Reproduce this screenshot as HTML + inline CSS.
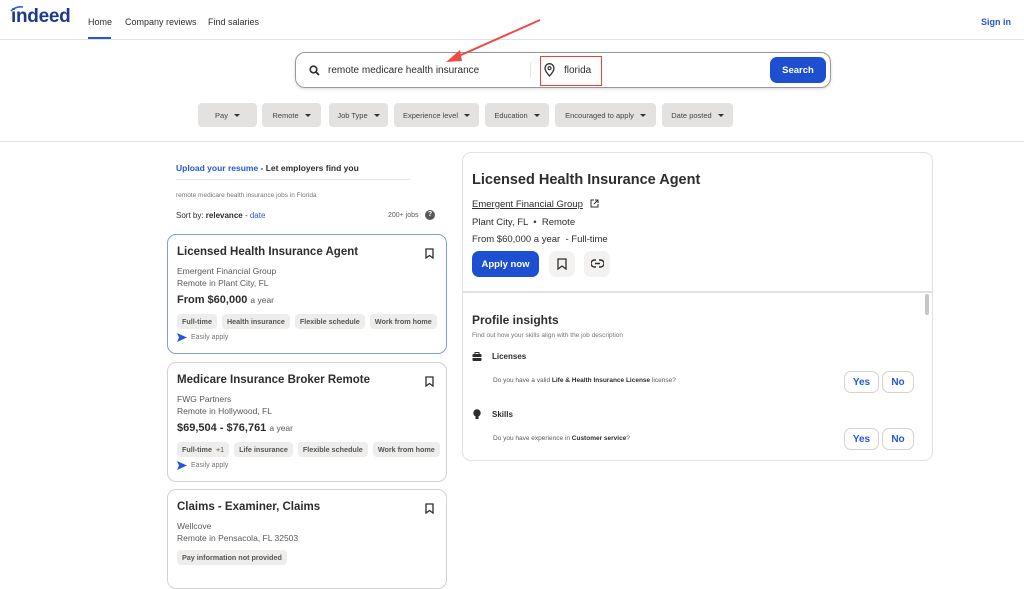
<!DOCTYPE html>
<html><head><meta charset="utf-8"><style>
*{box-sizing:border-box;margin:0;padding:0}
body{width:1024px;height:567px;overflow:hidden;background:#fff;font-family:"Liberation Sans",sans-serif;color:#2d2d2d;position:relative}
.a{position:absolute;white-space:nowrap}
.pill{position:absolute;top:103px;height:24px;background:#e4e2e0;border-radius:4px;font-size:7.5px;color:#444;display:flex;align-items:center;justify-content:center;gap:6px}
.pill:after{content:"";border:3px solid transparent;border-top:3px solid #333;margin-top:3px}
.card{position:absolute;left:167px;width:280px;border:1px solid #d4d2d0;border-radius:9px;background:#fff}
.card .t{position:absolute;left:9px;font-size:11.5px;font-weight:bold;color:#2d2d2d}
.card .s{position:absolute;left:9px;font-size:8.5px;color:#595959}
.card .p{position:absolute;left:9px;font-size:11px;font-weight:bold}
.card .p span{font-weight:normal;font-size:8.5px;color:#595959}
.tags{position:absolute;left:9px;display:flex;gap:5px}
.tag{background:#eeedeb;border-radius:4px;font-size:7.2px;font-weight:bold;color:#555;padding:3px 5px}
.ea{position:absolute;left:9px;font-size:7px;color:#767676;display:flex;align-items:center;gap:4px}
.bm{position:absolute;right:12px;width:9px;height:11px}
.yn{position:absolute;height:22px;border:1px solid #d4d2d0;border-radius:7px;font-size:10px;font-weight:bold;color:#2557d6;display:flex;align-items:center;justify-content:center}
</style></head><body>
<!-- header -->
<div class="a" style="left:11px;top:6px;font-size:19px;font-weight:bold;color:#1d3a8f;letter-spacing:-0.3px">indeed</div>
<svg class="a" style="left:10px;top:6px" width="14" height="6"><path d="M1 5 Q6 0 13 1" stroke="#2164f3" stroke-width="1.6" fill="none"/></svg>
<div class="a" style="left:88px;top:17px;font-size:9px;color:#2d2d2d">Home</div>
<div class="a" style="left:88px;top:37px;width:23px;height:2px;background:#2557d6"></div>
<div class="a" style="left:125px;top:17px;font-size:9px">Company reviews</div>
<div class="a" style="left:208px;top:17px;font-size:9px">Find salaries</div>
<div class="a" style="left:981px;top:17px;font-size:9px;font-weight:bold;color:#2557d6">Sign in</div>
<div class="a" style="left:0;top:39px;width:1024px;height:1px;background:#e4e2e0"></div>
<!-- search -->
<div class="a" style="left:295px;top:52px;width:536px;height:36px;border:1px solid #9a9896;border-radius:10px;box-shadow:0 1px 3px rgba(0,0,0,.15)"></div>
<svg class="a" style="left:309px;top:65px" width="11" height="11"><circle cx="4.5" cy="4.5" r="3.3" stroke="#2d2d2d" stroke-width="1.6" fill="none"/><path d="M7 7L10 10" stroke="#2d2d2d" stroke-width="1.8"/></svg>
<div class="a" style="left:328px;top:65px;font-size:10px">remote medicare health insurance</div>
<div class="a" style="left:530px;top:62px;width:1px;height:16px;background:#e4e2e0"></div>
<svg class="a" style="left:544px;top:63px" width="11" height="14"><path d="M5.5 13C5.5 13 1 8 1 5.2A4.5 4.5 0 0 1 10 5.2C10 8 5.5 13 5.5 13Z" stroke="#2d2d2d" stroke-width="1.3" fill="none"/><circle cx="5.5" cy="5.2" r="1.5" stroke="#2d2d2d" stroke-width="1.1" fill="none"/></svg>
<div class="a" style="left:564px;top:65px;font-size:10px">florida</div>
<div class="a" style="left:540px;top:56px;width:62px;height:30px;border:1.5px solid #e8413a"></div>
<div class="a" style="left:770px;top:57px;width:56px;height:26px;background:#1f4fd1;border-radius:7px;color:#fff;font-size:9.5px;font-weight:bold;display:flex;align-items:center;justify-content:center">Search</div>
<svg class="a" style="left:440px;top:15px" width="110" height="55"><path d="M100 5L12 44" stroke="#ee4b45" stroke-width="2"/><path d="M6 47L20 35L22 46Z" fill="#ee4b45"/></svg>
<!-- pills -->
<div class="pill" style="left:198px;width:59px">Pay</div>
<div class="pill" style="left:262px;width:59px">Remote</div>
<div class="pill" style="left:329px;width:59px">Job Type</div>
<div class="pill" style="left:394px;width:85px">Experience level</div>
<div class="pill" style="left:485px;width:64px">Education</div>
<div class="pill" style="left:555px;width:101px">Encouraged to apply</div>
<div class="pill" style="left:662px;width:71px">Date posted</div>
<div class="a" style="left:0;top:141px;width:1024px;height:1px;background:#e4e2e0"></div>
<!-- left column -->
<div class="a" style="left:176px;top:163px;font-size:8.5px;font-weight:bold"><span style="color:#2557d6">Upload your resume</span> - Let employers find you</div>
<div class="a" style="left:176px;top:179px;width:234px;height:1px;background:#e4e2e0"></div>
<div class="a" style="left:176px;top:192px;font-size:6.5px;color:#767676">remote medicare health insurance jobs in Florida</div>
<div class="a" style="left:176px;top:211px;font-size:8px">Sort by: <b>relevance</b> - <span style="color:#2557d6">date</span></div>
<div class="a" style="left:388px;top:212px;font-size:7px;color:#595959">200+ jobs</div>
<div class="a" style="left:425px;top:210px;width:10px;height:10px;border-radius:50%;background:#595959;color:#fff;font-size:7px;font-weight:bold;text-align:center;line-height:10px">?</div>

<div class="card" style="top:234px;height:120px;border-color:#7f9fdc">
<div class="t" style="top:11px">Licensed Health Insurance Agent</div>
<svg class="bm" style="top:13px" viewBox="0 0 9 11"><path d="M1 1H8V10L4.5 7.5L1 10Z" stroke="#2d2d2d" stroke-width="1.3" fill="none"/></svg>
<div class="s" style="top:31px">Emergent Financial Group</div>
<div class="s" style="top:43px">Remote in Plant City, FL</div>
<div class="p" style="top:59px">From $60,000 <span>a year</span></div>
<div class="tags" style="top:79px"><span class="tag">Full-time</span><span class="tag">Health insurance</span><span class="tag">Flexible schedule</span><span class="tag">Work from home</span></div>
<div class="ea" style="top:98px"><svg width="10" height="9"><path d="M0 0L10 4.5L0 9L2 4.5Z" fill="#2557d6"/></svg>Easily apply</div>
</div>
<div class="card" style="top:362px;height:120px">
<div class="t" style="top:11px">Medicare Insurance Broker Remote</div>
<svg class="bm" style="top:13px" viewBox="0 0 9 11"><path d="M1 1H8V10L4.5 7.5L1 10Z" stroke="#2d2d2d" stroke-width="1.3" fill="none"/></svg>
<div class="s" style="top:31px">FWG Partners</div>
<div class="s" style="top:43px">Remote in Hollywood, FL</div>
<div class="p" style="top:59px">$69,504 - $76,761 <span>a year</span></div>
<div class="tags" style="top:79px"><span class="tag">Full-time &nbsp;<span style="font-weight:normal">+1</span></span><span class="tag">Life insurance</span><span class="tag">Flexible schedule</span><span class="tag">Work from home</span></div>
<div class="ea" style="top:98px"><svg width="10" height="9"><path d="M0 0L10 4.5L0 9L2 4.5Z" fill="#2557d6"/></svg>Easily apply</div>
</div>
<div class="card" style="top:489px;height:100px">
<div class="t" style="top:11px">Claims - Examiner, Claims</div>
<svg class="bm" style="top:13px" viewBox="0 0 9 11"><path d="M1 1H8V10L4.5 7.5L1 10Z" stroke="#2d2d2d" stroke-width="1.3" fill="none"/></svg>
<div class="s" style="top:31px">Wellcove</div>
<div class="s" style="top:43px">Remote in Pensacola, FL 32503</div>
<div class="tags" style="top:60px"><span class="tag">Pay information not provided</span></div>
</div>
<!-- right panel -->
<div class="a" style="left:462px;top:152px;width:471px;height:309px;border:1px solid #e4e2e0;border-radius:9px"></div>
<div class="a" style="left:472px;top:172px;font-size:14.5px;font-weight:bold">Licensed Health Insurance Agent</div>
<div class="a" style="left:472px;top:199px;font-size:9.5px;color:#2d2d2d;text-decoration:underline">Emergent Financial Group</div>
<svg class="a" style="left:590px;top:199px" width="9" height="9"><path d="M4 1H1V8H8V5M5 1H8V4M8 1L4 5" stroke="#2d2d2d" stroke-width="1" fill="none"/></svg>
<div class="a" style="left:472px;top:217px;font-size:9.5px;color:#2d2d2d">Plant City, FL &nbsp;•&nbsp; Remote</div>
<div class="a" style="left:472px;top:234px;font-size:9.5px">From $60,000 a year &nbsp;- Full-time</div>
<div class="a" style="left:472px;top:251px;width:67px;height:26px;background:#1f4fd1;border-radius:7px;color:#fff;font-size:9.5px;font-weight:bold;display:flex;align-items:center;justify-content:center">Apply now</div>
<div class="a" style="left:549px;top:251px;width:26px;height:26px;background:#f3f2f1;border-radius:7px"></div>
<svg class="a" style="left:557px;top:258px" width="10" height="12"><path d="M1 1H9V11L5 8L1 11Z" stroke="#2d2d2d" stroke-width="1.3" fill="none"/></svg>
<div class="a" style="left:584px;top:251px;width:26px;height:26px;background:#f3f2f1;border-radius:7px"></div>
<svg class="a" style="left:591px;top:259px" width="13" height="9"><path d="M5 1H3.5A3 3 0 0 0 3.5 8H5M8 1H9.5A3 3 0 0 1 9.5 8H8M4 4.5H9" stroke="#2d2d2d" stroke-width="1.4" fill="none"/></svg>
<div class="a" style="left:462px;top:291px;width:471px;height:2px;background:#e4e2e0"></div>
<div class="a" style="left:925px;top:294px;width:4px;height:21px;background:#c8c6c4;border-radius:2px"></div>
<div class="a" style="left:472px;top:313px;font-size:12px;font-weight:bold">Profile insights</div>
<div class="a" style="left:472px;top:332px;font-size:6.5px;color:#767676">Find out how your skills align with the job description</div>
<svg class="a" style="left:472px;top:352px" width="10" height="9"><rect x="0.5" y="2" width="9" height="7" rx="1" fill="#2d2d2d"/><rect x="3" y="0.5" width="4" height="2" stroke="#2d2d2d" fill="none"/><rect x="0" y="5" width="10" height="1" fill="#fff"/></svg>
<div class="a" style="left:492px;top:352px;font-size:8px;font-weight:bold">Licenses</div>
<div class="a" style="left:493px;top:377px;font-size:6.5px;color:#595959">Do you have a valid <b style="color:#2d2d2d">Life &amp; Health Insurance License</b> license?</div>
<div class="yn" style="left:844px;top:371px;width:35px">Yes</div>
<div class="yn" style="left:882px;top:371px;width:32px">No</div>
<svg class="a" style="left:473px;top:409px" width="8" height="11"><circle cx="4" cy="4" r="3.7" fill="#2d2d2d"/><rect x="2.5" y="7" width="3" height="3" fill="#2d2d2d"/></svg>
<div class="a" style="left:492px;top:410px;font-size:8px;font-weight:bold">Skills</div>
<div class="a" style="left:493px;top:435px;font-size:6.5px;color:#595959">Do you have experience in <b style="color:#2d2d2d">Customer service</b>?</div>
<div class="yn" style="left:844px;top:428px;width:35px">Yes</div>
<div class="yn" style="left:882px;top:428px;width:32px">No</div>
</body></html>
